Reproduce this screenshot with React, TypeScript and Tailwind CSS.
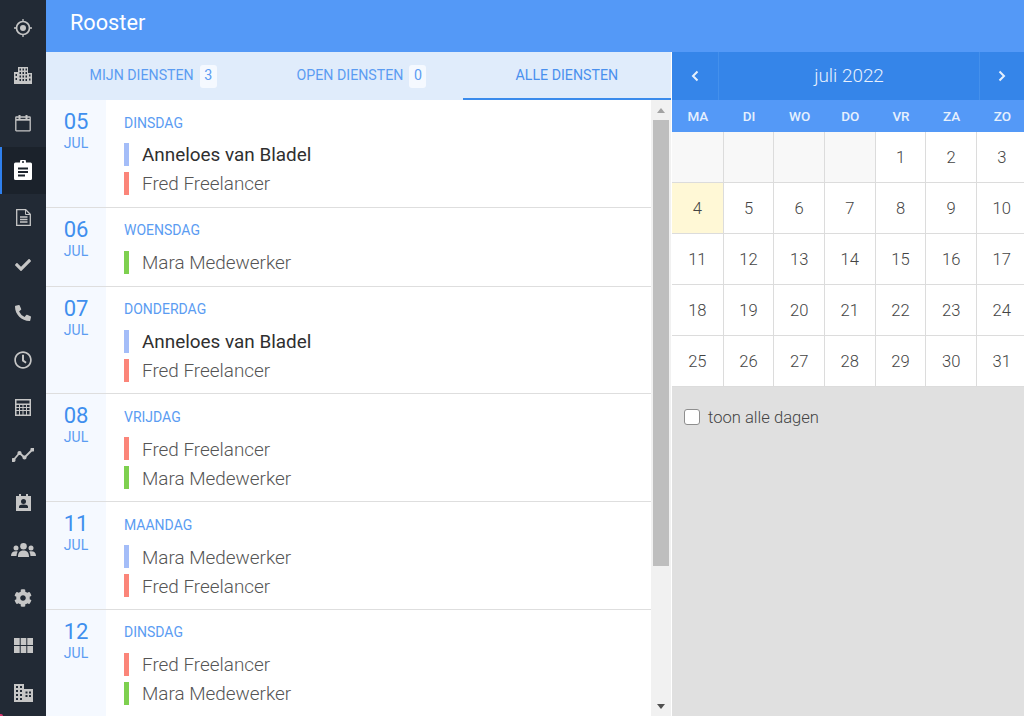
import { FaCheck, FaCog, FaPhoneAlt, FaRegClock } from "react-icons/fa";

const CrosshairIcon = () => (
  <svg width="18" height="18" viewBox="0 0 18 18" fill="none" stroke="currentColor">
    <circle cx="9" cy="9" r="6.500" strokeWidth="1.700" />
    <circle cx="9" cy="9" r="3" fill="currentColor" stroke="none" />
    <path d="M9 0v2.500M9 15.500V18M0 9h2.500M15.500 9H18" strokeWidth="1.300" />
  </svg>
);

const BuildingsIcon = () => (
  <svg width="18" height="17" viewBox="0 0 18 17" fill="currentColor">
    <path
      fillRule="evenodd"
      d="M4 0h10v6h4v11H0V5h4V0zm1.500 1.500v2H7v-2H5.500zm3 0v2H10v-2H8.500zm3 0v2H13v-2h-1.500zm-6 3.500v2H7V5H5.500zm3 0v2H10V5H8.500zm3 0v2H13V5h-1.500zM1.500 7v2H3V7H1.500zm4 1.500v2H7v-2H5.500zm3 0v2H10v-2H8.500zm3 0v2H13v-2h-1.500zm3.500-1v2h1.500v-2H15zM1.500 11v2H3v-2H1.500zm4 1v2H7v-2H5.500zm3 0v2H10v-2H8.500zm3 0v2H13v-2h-1.500zm3.500-.5v2h1.500v-2H15z"
    />
  </svg>
);

const CalendarIcon = () => (
  <svg width="16" height="18" viewBox="0 0 16 18" fill="none" stroke="currentColor">
    <rect x="0.800" y="3" width="14.400" height="13.800" strokeWidth="1.300" rx="0.500" />
    <path d="M1 5.800h14" strokeWidth="1.800" />
    <path d="M4.500 1v4M11.500 1v4" strokeWidth="2" />
  </svg>
);

const ClipboardIcon = () => (
  <svg width="18" height="20" viewBox="0 0 18 20" fill="currentColor">
    <path
      fillRule="evenodd"
      d="M6 2.500V2a3 3 0 016 0v.500h4.500A1.500 1.500 0 0118 4v14.500a1.500 1.500 0 01-1.500 1.500h-15A1.500 1.500 0 010 18.500V4a1.500 1.500 0 011.500-1.500H6zM8 2a1 1 0 102 0 1 1 0 00-2 0zM4 7.500V9.500h10V7.500H4zm0 3.500v2h10v-2H4zm0 3.500v2h7v-2H4z"
    />
  </svg>
);

const FileIcon = () => (
  <svg width="15" height="17" viewBox="0 0 15 17" fill="none" stroke="currentColor">
    <path d="M0.700 0.700h9l4.600 4.600v11H0.700z" strokeWidth="1.300" />
    <path d="M9.500 1v4.500H14" strokeWidth="1" />
    <path d="M4 8h7.500M4 10.500h7.500M4 13h7.500" strokeWidth="1.300" />
  </svg>
);

const CalculatorIcon = () => (
  <svg width="16" height="17" viewBox="0 0 16 17" fill="currentColor">
    <path
      fillRule="evenodd"
      d="M0 0h16v17H0V0zm1.500 1.500v3h13v-3h-13zm0 4.500v2h2.500V6H1.500zm3.500 0v2h2.500V6H5zm3.500 0v2H11V6H8.500zm3.500 0v2h2.500V6H12zm-10.500 3v2h2.500V9H1.500zM5 9v2h2.500V9H5zm3.500 0v2H11V9H8.500zM12 9v2h2.500V9H12zm-10.500 3v3.500h2.500V12H1.500zM5 12v3.500h2.500V12H5zm3.500 0v3.500H11V12H8.500zm3.500 0v3.500h2.500V12H12z"
    />
  </svg>
);

const ChartIcon = () => (
  <svg width="22" height="14" viewBox="0 0 22 14" fill="none" stroke="currentColor" strokeWidth="1.800" strokeLinecap="round" strokeLinejoin="round">
    <path d="M1.500 12L7.500 5l5 4.500L20.500 1.500" />
    <circle cx="1.500" cy="12" r="1.200" fill="currentColor" />
    <circle cx="7.500" cy="5" r="1.200" fill="currentColor" />
    <circle cx="12.500" cy="9.500" r="1.200" fill="currentColor" />
    <circle cx="20.500" cy="1.500" r="1.200" fill="currentColor" />
  </svg>
);

const ContactIcon = () => (
  <svg width="15" height="17" viewBox="0 0 15 17" fill="currentColor">
    <path
      fillRule="evenodd"
      d="M3 0h2v2h5V0h2v2h3v15H0V2h3V0zm4.500 5a2.500 2.500 0 100 5 2.500 2.500 0 000-5zM3 14h9v-1.500c0-1.200-1.500-2-4.500-2s-4.500.8-4.500 2V14z"
    />
  </svg>
);

const TeamIcon = () => (
  <svg width="25" height="14" viewBox="0 0 25 14" fill="currentColor">
    <circle cx="5" cy="5" r="2.500" />
    <circle cx="20" cy="5" r="2.500" />
    <circle cx="12.500" cy="3.300" r="3.300" />
    <path d="M0 13c0-3 1.500-4.800 4.800-4.800.8 0 1.400.1 1.900.3C6 9.800 5.600 11.300 5.500 13H0zM25 13c0-3-1.500-4.800-4.800-4.800-.8 0-1.400.1-1.900.3.700 1.300 1.100 2.800 1.200 4.500H25zM7 14c0-4 1.500-6.500 5.500-6.500S18 10 18 14H7z" />
  </svg>
);

const GridIcon = () => (
  <svg width="19" height="15" viewBox="0 0 19 15" fill="currentColor">
    <path d="M0 0h5.700v7H0zM6.700 0h5.600v7H6.700zM13.300 0H19v7h-5.700zM0 8h5.700v7H0zM6.700 8h5.600v7H6.700zM13.300 8H19v7h-5.700z" />
  </svg>
);

const OfficeIcon = () => (
  <svg width="19" height="18" viewBox="0 0 19 18" fill="currentColor">
    <path
      fillRule="evenodd"
      d="M0 0h10v5h9v13H0V0zm2 2v2h2V2H2zm4 0v2h2V2H6zM2 6v2h2V6H2zm4 0v2h2V6H6zm5.500 1.500v2h2v-2h-2zm3.500 0v2h2v-2h-2zM2 10v2h2v-2H2zm4 0v2h2v-2H6zm5.500 1v2h2v-2h-2zm3.500 0v2h2v-2h-2zM2 14v2h2v-2H2zm4 0v2h2v-2H6z"
    />
  </svg>
);

const navItems = [
  <CrosshairIcon />,
  <BuildingsIcon />,
  <CalendarIcon />,
  <ClipboardIcon />,
  <FileIcon />,
  <FaCheck size={16} />,
  <FaPhoneAlt size={16} />,
  <FaRegClock size={18} />,
  <CalculatorIcon />,
  <ChartIcon />,
  <ContactIcon />,
  <TeamIcon />,
  <FaCog size={18} />,
  <GridIcon />,
  <OfficeIcon />,
];

const ANNELOES = { name: "Anneloes van Bladel", bar: "bg-[#a4bdf8]", strong: true };
const FRED = { name: "Fred Freelancer", bar: "bg-[#fb8579]", strong: false };
const MARA = { name: "Mara Medewerker", bar: "bg-[#7ed04f]", strong: false };
const MARA_BLUE = { name: "Mara Medewerker", bar: "bg-[#a4bdf8]", strong: false };

const days = [
  { date: "05", label: "DINSDAG", people: [ANNELOES, FRED] },
  { date: "06", label: "WOENSDAG", people: [MARA] },
  { date: "07", label: "DONDERDAG", people: [ANNELOES, FRED] },
  { date: "08", label: "VRIJDAG", people: [FRED, MARA] },
  { date: "11", label: "MAANDAG", people: [MARA_BLUE, FRED] },
  { date: "12", label: "DINSDAG", people: [FRED, MARA] },
];

const weekdays = ["MA", "DI", "WO", "DO", "VR", "ZA", "ZO"];
const cells: (number | null)[] = [null, null, null, null];
for (let d = 1; d <= 31; d++) cells.push(d);

const Tab = ({ label, count, active }: { label: string; count?: number; active?: boolean }) => (
  <div
    className={`w-1/3 shrink-0 flex items-center justify-center gap-[6px] pt-[2px] border-b-2 ${
      active ? "border-[#3a8bec] text-[#4a90ee]" : "border-transparent pl-[6px] text-[#5b9cf2]"
    }`}
  >
    <span className="text-[14.200px]">{label}</span>
    {count !== undefined && (
      <span className="w-[17px] h-[23px] flex items-center justify-center rounded-[3px] bg-[#f5f9ff] text-[14.200px]">{count}</span>
    )}
  </div>
);

export default function App() {
  return (
    <div className="relative flex h-[716px] w-[1024px] overflow-hidden bg-white font-['Roboto',sans-serif]">
      <nav className="w-[46px] shrink-0 pt-[4px] bg-[#222a35] text-[#c6c6c6]">
        {navItems.map((icon, i) => (
          <div
            key={i}
            className={`h-[47.500px] flex items-center justify-center ${
              i === 3 ? "bg-[#1b222b] text-white border-l-2 border-[#2f80ed] pr-[2px]" : ""
            }`}
          >
            {icon}
          </div>
        ))}
      </nav>
      <span className="absolute left-0 bottom-0 w-[3px] h-[2px] rounded-tr-[2px] bg-[#d6336c]" />

      <div className="flex-1 flex flex-col min-w-0">
        <header className="h-[52px] shrink-0 flex items-center pl-[24px] pb-[6px] bg-[#5499f7] text-white text-[21.700px]">Rooster</header>

        <div className="flex-1 flex min-h-0">
          <section className="w-[626px] shrink-0 flex flex-col pr-[1px]">
            <div className="h-[48px] shrink-0 flex bg-[#e0ecfb]">
              <Tab label="MIJN DIENSTEN" count={3} />
              <Tab label="OPEN DIENSTEN" count={0} />
              <Tab label="ALLE DIENSTEN" active />
            </div>

            <div className="flex-1 flex min-h-0">
              <div className="flex-1 overflow-hidden">
                {days.map((day) => (
                  <div key={day.date} className="flex border-b border-[#dedede]">
                    <div className="w-[60px] shrink-0 pt-[9px] flex flex-col items-center bg-[#f5f9ff] text-[#3f8fee]">
                      <span className="text-[22px] leading-[25px]">{day.date}</span>
                      <span className="text-[14px] leading-[18px] text-[#5b9cf2]">JUL</span>
                    </div>
                    <div className="flex-1 pl-[18px] pt-[14px] pb-[11.800px]">
                      <div className="h-[16px] mb-[13px] pt-[2px] flex items-center text-[14px] text-[#5b9cf2]">{day.label}</div>
                      <div className="flex flex-col gap-[6px]">
                        {day.people.map((person) => (
                          <div key={person.name} className="h-[23px] flex items-center gap-[13px]">
                            <span className={`w-[5px] h-[23px] ${person.bar}`} />
                            <span className={`pt-[2px] text-[18.900px] ${person.strong ? "text-[#2f2f2f]" : "text-[#555555] font-light"}`}>{person.name}</span>
                          </div>
                        ))}
                      </div>
                    </div>
                  </div>
                ))}
              </div>

              <div className="w-[20px] shrink-0 flex flex-col items-center bg-[#f1f1f1]">
                <div className="h-[20px] shrink-0 flex items-center justify-center">
                  <span className="w-0 h-0 border-x-[4px] border-x-transparent border-b-[5px] border-b-[#a3a3a3]" />
                </div>
                <div className="w-[16px] h-[446px] bg-[#bebebe]" />
                <div className="flex-1" />
                <div className="h-[20px] shrink-0 flex items-center justify-center">
                  <span className="w-0 h-0 border-x-[4px] border-x-transparent border-t-[5px] border-t-[#505050]" />
                </div>
              </div>
            </div>
          </section>

          <aside className="flex-1 flex flex-col bg-[#e0e0e0] min-w-0 overflow-hidden">
            <div className="h-[48px] shrink-0 flex bg-[#3585e9] text-[#e6f0fd]">
              <div className="w-[47px] flex items-center justify-center border-r border-[#4490ec]">
                <svg width="8" height="12" viewBox="0 0 8 12" fill="none" stroke="currentColor" strokeWidth="2"><path d="M6.500 1.500L2 6l4.500 4.500" /></svg>
              </div>
              <div className="flex-1 flex items-center justify-center pt-[1px] text-[18.900px] font-light">juli 2022</div>
              <div className="w-[45px] flex items-center justify-center border-l border-[#4490ec]">
                <svg width="8" height="12" viewBox="0 0 8 12" fill="none" stroke="currentColor" strokeWidth="2"><path d="M1.500 1.500L6 6l-4.500 4.500" /></svg>
              </div>
            </div>

            <div className="w-[355.700px] h-[32px] shrink-0 grid grid-cols-[51.700px_repeat(6,50.670px)] bg-[#5499f7] text-[#e6f0fd] text-[13.500px] font-medium">
              {weekdays.map((w) => (
                <div key={w} className="flex items-center justify-center">{w}</div>
              ))}
            </div>

            <div className="w-[355.700px] grid grid-cols-[51.700px_repeat(6,50.670px)] auto-rows-[51px] bg-white">
              {cells.map((c, i) => (
                <div
                  key={i}
                  className={`flex items-center justify-center pt-[2px] text-[16.600px] font-light text-[#444444] border-b border-r border-[#dcdcdc] ${
                    c === null ? "bg-[#f8f8f8]" : c === 4 ? "bg-[#fff8d6]" : ""
                  }`}
                >
                  {c}
                </div>
              ))}
            </div>

            <label className="flex items-start gap-[8px] pl-[12px] pt-[22px] text-[16.600px] leading-[18px] font-light text-[#444444]">
              <span className="w-[16px] h-[16px] rounded-[3px] border border-[#8e8e8e] bg-white" />
              toon alle dagen
            </label>
          </aside>
        </div>
      </div>
    </div>
  );
}
